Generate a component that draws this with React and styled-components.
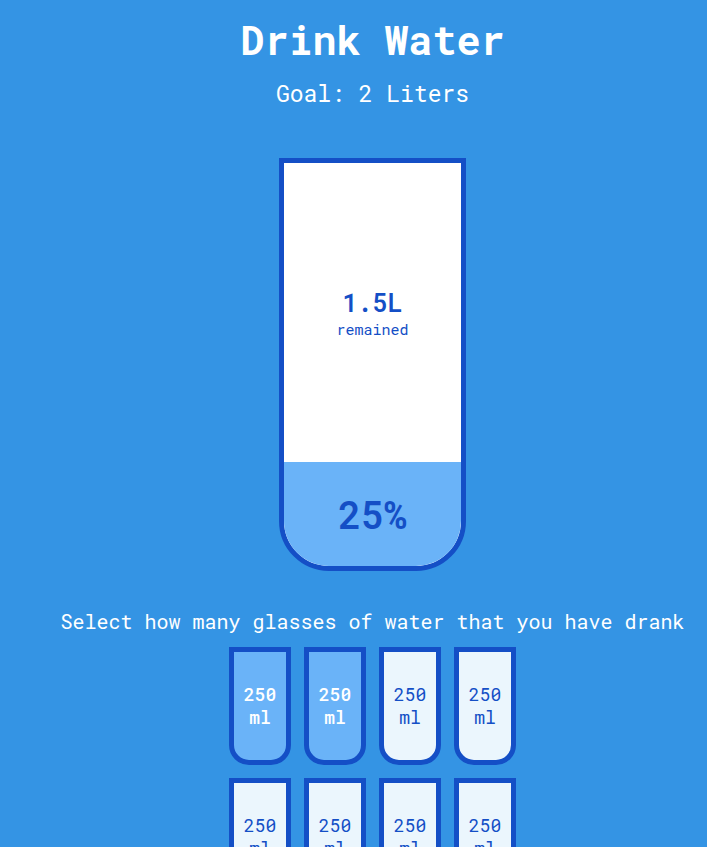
import React, { useState } from "react";
import styled, { createGlobalStyle } from "styled-components";

const colors = {
  page: "#3494e4",
  border: "#144fc6",
  fill: "#6ab3f8",
  cup: "#ebf6fd",
};

const GlobalStyle = createGlobalStyle`
  * { box-sizing: border-box; }
  body {
    margin: 0;
    background: ${colors.page};
    color: #fff;
    font-family: "Roboto Mono", "DejaVu Sans Mono", monospace;
  }
`;

const Page = styled.main`
  display: flex;
  flex-direction: column;
  align-items: center;
  padding: 12px 0 40px 38px;
`;

const Title = styled.h1`
  margin: 0;
  font-size: 40px;
  line-height: 56px;
`;

const Goal = styled.h2`
  margin: 9px 0 49px;
  font-size: 23px;
  font-weight: 400;
  line-height: 32px;
`;

const Bottle = styled.section`
  display: flex;
  flex-direction: column;
  width: 187px;
  height: 413px;
  overflow: hidden;
  border: 5px solid ${colors.border};
  border-radius: 0 0 50px 50px;
  background: #fff;
  color: ${colors.border};
`;

const Remained = styled.div`
  flex: 1;
  display: flex;
  flex-direction: column;
  align-items: center;
  justify-content: center;
`;

const Liters = styled.span`
  font-size: 25px;
  font-weight: 600;
  line-height: 32px;
`;

const Note = styled.small`
  font-size: 15px;
  line-height: 20px;
`;

const Percentage = styled.div`
  flex-shrink: 0;
  display: flex;
  align-items: center;
  justify-content: center;
  background: ${colors.fill};
  font-size: 38px;
  font-weight: 600;
`;

const Prompt = styled.p`
  margin: 37px 0 13px;
  font-size: 20px;
  line-height: 26px;
  white-space: nowrap;
`;

const Cups = styled.div`
  display: grid;
  grid-template-columns: repeat(4, 62px);
  gap: 13px;
`;

const Cup = styled.button`
  height: 118px;
  padding: 0;
  border: 5px solid ${colors.border};
  border-radius: 0 0 20px 20px;
  background: ${({ $full }) => ($full ? colors.fill : colors.cup)};
  color: ${({ $full }) => ($full ? "#fff" : colors.border)};
  font-family: inherit;
  font-size: 18px;
  font-weight: ${({ $full }) => ($full ? 500 : 400)};
  line-height: 23px;
  cursor: pointer;
`;

const TOTAL = 8;
const FILL_HEIGHT = 416;

export default function App() {
  const [drunk, setDrunk] = useState(2);
  const share = drunk / TOTAL;

  return (
    <>
      <GlobalStyle />
      <Page>
        <Title>Drink Water</Title>
        <Goal>Goal: 2 Liters</Goal>
        <Bottle>
          {drunk < TOTAL && (
            <Remained>
              <Liters>{2 - share * 2}L</Liters>
              <Note>remained</Note>
            </Remained>
          )}
          {drunk > 0 && (
            <Percentage style={{ height: share * FILL_HEIGHT }}>
              {share * 100}%
            </Percentage>
          )}
        </Bottle>
        <Prompt>Select how many glasses of water that you have drank</Prompt>
        <Cups>
          {Array.from({ length: TOTAL }, (_, i) => (
            <Cup
              key={i}
              type="button"
              $full={i < drunk}
              aria-pressed={i < drunk}
              onClick={() => setDrunk(i + 1 === drunk ? i : i + 1)}
            >
              250
              <br />
              ml
            </Cup>
          ))}
        </Cups>
      </Page>
    </>
  );
}
